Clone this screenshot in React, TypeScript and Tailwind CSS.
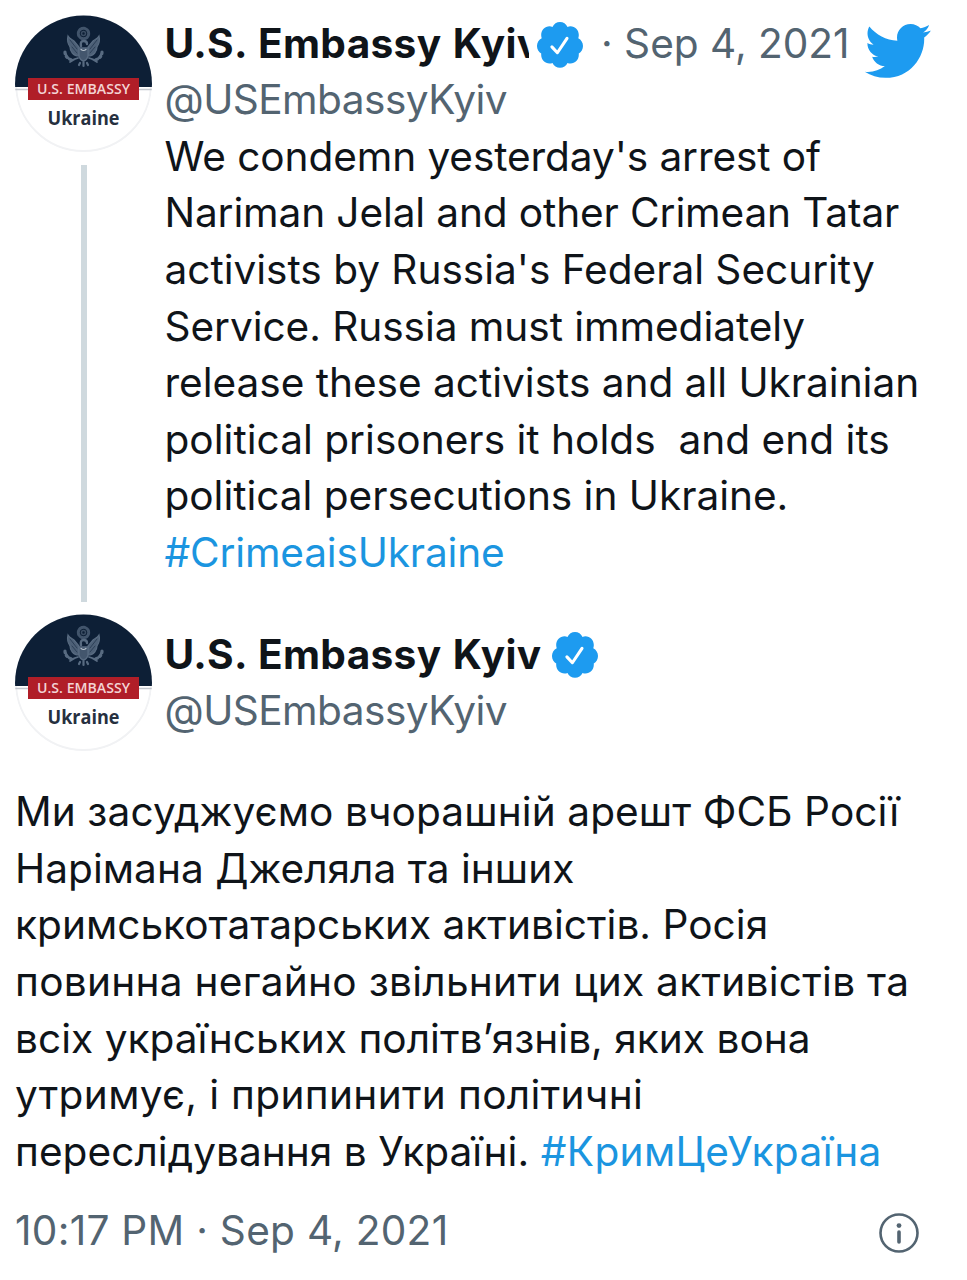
const BADGE_PATH =
  'M22.5 12.5c0-1.58-.875-2.95-2.148-3.6.154-.435.238-.905.238-1.4 0-2.21-1.71-3.998-3.818-3.998-.47 0-.92.084-1.336.25C14.818 2.415 13.51 1.5 12 1.5s-2.816.917-3.437 2.25c-.415-.165-.866-.25-1.336-.25-2.11 0-3.818 1.79-3.818 4 0 .494.083.964.237 1.4-1.272.65-2.147 2.018-2.147 3.6 0 1.495.782 2.798 1.942 3.486-.02.17-.032.34-.032.514 0 2.21 1.708 4 3.818 4 .47 0 .92-.086 1.335-.25.62 1.334 1.926 2.25 3.437 2.25 1.512 0 2.818-.916 3.437-2.25.415.163.865.248 1.336.248 2.11 0 3.818-1.79 3.818-4 0-.174-.012-.344-.033-.513 1.158-.687 1.943-1.99 1.943-3.484z';

const BIRD_PATH =
  'M23.643 4.937c-.835.37-1.732.62-2.675.733.962-.576 1.7-1.49 2.048-2.578-.9.534-1.897.922-2.958 1.13-.85-.904-2.06-1.47-3.4-1.47-2.572 0-4.658 2.086-4.658 4.66 0 .364.042.718.12 1.06-3.873-.195-7.304-2.05-9.602-4.868-.4.69-.63 1.49-.63 2.342 0 1.616.823 3.043 2.072 3.878-.764-.025-1.482-.234-2.11-.583v.06c0 2.257 1.605 4.14 3.737 4.568-.392.106-.803.162-1.227.162-.3 0-.593-.028-.877-.082.593 1.85 2.313 3.198 4.352 3.234-1.595 1.25-3.604 1.995-5.786 1.995-.376 0-.747-.022-1.112-.065 2.062 1.323 4.51 2.093 7.14 2.093 8.57 0 13.255-7.098 13.255-13.254 0-.2-.005-.402-.014-.602.91-.658 1.7-1.477 2.323-2.41z';

function VerifiedBadge() {
  return (
    <svg viewBox="1.5 1.5 21 21.1" preserveAspectRatio="none" className="h-[46px] w-[46px] shrink-0">
      <path d={BADGE_PATH} fill="#1d9bf0" />
      <path d="M8.3 12.9l2.5 2.7 4.4-6.6" fill="none" stroke="#fff" strokeWidth="1.4" strokeLinecap="round" strokeLinejoin="round" />
    </svg>
  );
}

function Eagle() {
  return (
    <g fill="none" stroke="#586b81" strokeLinecap="round">
      <circle cx="68.5" cy="18.5" r="5.2" strokeWidth="3" strokeDasharray="2.2 1" opacity="0.7" />
      <circle cx="68.5" cy="18.5" r="2" strokeWidth="1.5" opacity="0.6" />
      <path d="M53 21c1 2 3 3 6 5l5 6v9c-6 0-9-5-9-9-2-3-3-7-2-11zM84 21c-1 2-3 3-6 5l-5 6v9c6 0 9-5 9-9 2-3 3-7 2-11z" fill="#4d6077" strokeWidth="1.2" />
      <path d="M55 25l7 9M57 32l5 6M82 25l-7 9M80 32l-5 6" stroke="#24374f" strokeWidth="0.8" />
      <path d="M66 31q-1-5 2.5-5t3.5 3" strokeWidth="2.4" />
      <path d="M64 33h9v8q-1 4-4.500 5-3.5-1-4.500-5z" fill="#43566d" strokeWidth="1.4" />
      <path d="M66 34.5q2.5 2 5 0" stroke="#b9c4cf" strokeWidth="1.2" />
      <path d="M50 37q0 6 7 8M87 37q0 6-7 8" strokeWidth="3.2" strokeDasharray="1.5 3" />
      <path d="M51 39q2 5 6 6l6-2M86 39q-2 5-6 6l-6-2M55 47l5-3M82 47l-5-3" strokeWidth="1.8" />
      <path d="M65 48l-1 2M68.5 47v4M72 48l1 2" strokeWidth="2.2" />
    </g>
  );
}

function Avatar() {
  return (
    <svg viewBox="0 0 137 137" className="h-[137px] w-[137px] shrink-0">
      <clipPath id="avatar-clip">
        <circle cx="68.5" cy="69" r="68.5" />
      </clipPath>
      <g clipPath="url(#avatar-clip)">
        <circle cx="68.5" cy="68.5" r="67.5" fill="#fff" stroke="#f1f2f4" strokeWidth="2" />
        <rect width="137" height="72" fill="#0d1f36" />
        <path d="M0 74.5h137" stroke="#c3c7cd" strokeWidth="1.6" />
      </g>
      <Eagle />
      <rect x="13" y="63" width="111" height="22" fill="#b01e28" />
      <text x="22" y="79" fill="#f3d4d4" fontFamily="Open Sans, sans-serif" fontSize="13.5" fontWeight="600" textLength="93" lengthAdjust="spacingAndGlyphs">
        U.S. EMBASSY
      </text>
      <text x="32.5" y="109.5" fill="#26303f" fontFamily="Open Sans, sans-serif" fontSize="19" fontWeight="700" textLength="72" lengthAdjust="spacingAndGlyphs">
        Ukraine
      </text>
    </svg>
  );
}

const englishLines = [
  { text: "We condemn yesterday's arrest of", className: 'tracking-[-0.09px]' },
  { text: 'Nariman Jelal and other Crimean Tatar', className: 'tracking-[-0.12px]' },
  { text: "activists by Russia's Federal Security", className: 'tracking-[-0.02px]' },
  { text: 'Service. Russia must immediately', className: 'tracking-[-0.05px]' },
  { text: 'release these activists and all Ukrainian', className: 'tracking-[-0.02px]' },
  { text: 'political prisoners it holds  and end its', className: 'tracking-[0.02px]' },
  { text: 'political persecutions in Ukraine.', className: 'tracking-[-0.03px]' },
  { text: '#CrimeaisUkraine', className: 'tracking-[-0.17px] text-[#1b95e0]' },
];

const ukrainianLines = [
  { text: 'Ми засуджуємо вчорашній арешт ФСБ Росії', className: 'tracking-[0.1px]' },
  { text: 'Нарімана Джеляла та інших', className: 'tracking-[0.04px]' },
  { text: 'кримськотатарських активістів. Росія', className: 'tracking-[0.03px]' },
  { text: 'повинна негайно звільнити цих активістів та', className: 'tracking-[0.28px]' },
  { text: 'всіх українських політвʼязнів, яких вона', className: 'tracking-[0.03px]' },
  { text: 'утримує, і припинити політичні', className: 'tracking-[0.34px]' },
  { text: 'переслідування в Україні. ', className: 'tracking-[0.04px]', tag: '#КримЦеУкраїна' },
];

export default function App() {
  return (
    <div className="h-[1280px] w-[967px] overflow-hidden whitespace-pre bg-white pl-[15px] font-['Inter','Liberation_Sans',sans-serif] text-[40.6px] leading-[56.6px] text-[#0f1419]">
      <article className="flex h-[614px] pt-[15px]">
        <div className="flex w-[137px] flex-col items-center">
          <Avatar />
          <div className="mt-[13px] h-[437px] w-1.5 bg-[#cfd9de]" />
        </div>
        <div className="ml-[12.5px] pt-[0.6px]">
          <header className="flex h-[56.6px]">
            <div className="w-[364px] overflow-hidden font-bold tracking-[0.33px] [word-spacing:1.5px]">U.S. Embassy Kyiv</div>
            <div className="ml-[8.5px] mt-1.5">
              <VerifiedBadge />
            </div>
            <div className="ml-[18px] w-[260.5px] text-[#536471]">· Sep 4, 2021</div>
            <svg viewBox="0 0 24 24" className="h-[70px] w-[70px] shrink-0" fill="#1d9bf0">
              <path d={BIRD_PATH} />
            </svg>
          </header>
          <div className="tracking-[-0.55px] text-[#536471]">@USEmbassyKyiv</div>
          {englishLines.map((line) => (
            <div key={line.text} className={line.className}>
              {line.text}
            </div>
          ))}
        </div>
      </article>

      <article>
        <header className="flex">
          <Avatar />
          <div className="ml-[12.5px] pt-[12.5px]">
            <div className="flex h-[56.6px]">
              <span className="w-[387px] font-bold tracking-[0.33px] [word-spacing:1.5px]">U.S. Embassy Kyiv</span>
              <div className="mt-[5.5px]">
                <VerifiedBadge />
              </div>
            </div>
            <div className="tracking-[-0.55px] text-[#536471]">@USEmbassyKyiv</div>
          </div>
        </header>
        <div className="mt-[33.3px]">
          {ukrainianLines.map((line) => (
            <div key={line.text} className={line.className}>
              {line.text}
              {line.tag && <span className="tracking-[0.38px] text-[#1b95e0]">{line.tag}</span>}
            </div>
          ))}
        </div>
        <footer className="mt-[22.7px] flex text-[#536471]">
          <span className="w-[864px] tracking-[0.28px]">10:17 PM · Sep 4, 2021</span>
          <svg viewBox="0 0 40 40" className="mt-[10px] h-10 w-10" fill="none" stroke="#536471">
            <circle cx="20" cy="20" r="18.5" strokeWidth="2.6" />
            <circle cx="20" cy="12.6" r="2.4" fill="#536471" stroke="none" />
            <path d="M20 19v10" strokeWidth="3.6" strokeLinecap="round" />
          </svg>
        </footer>
      </article>
    </div>
  );
}
